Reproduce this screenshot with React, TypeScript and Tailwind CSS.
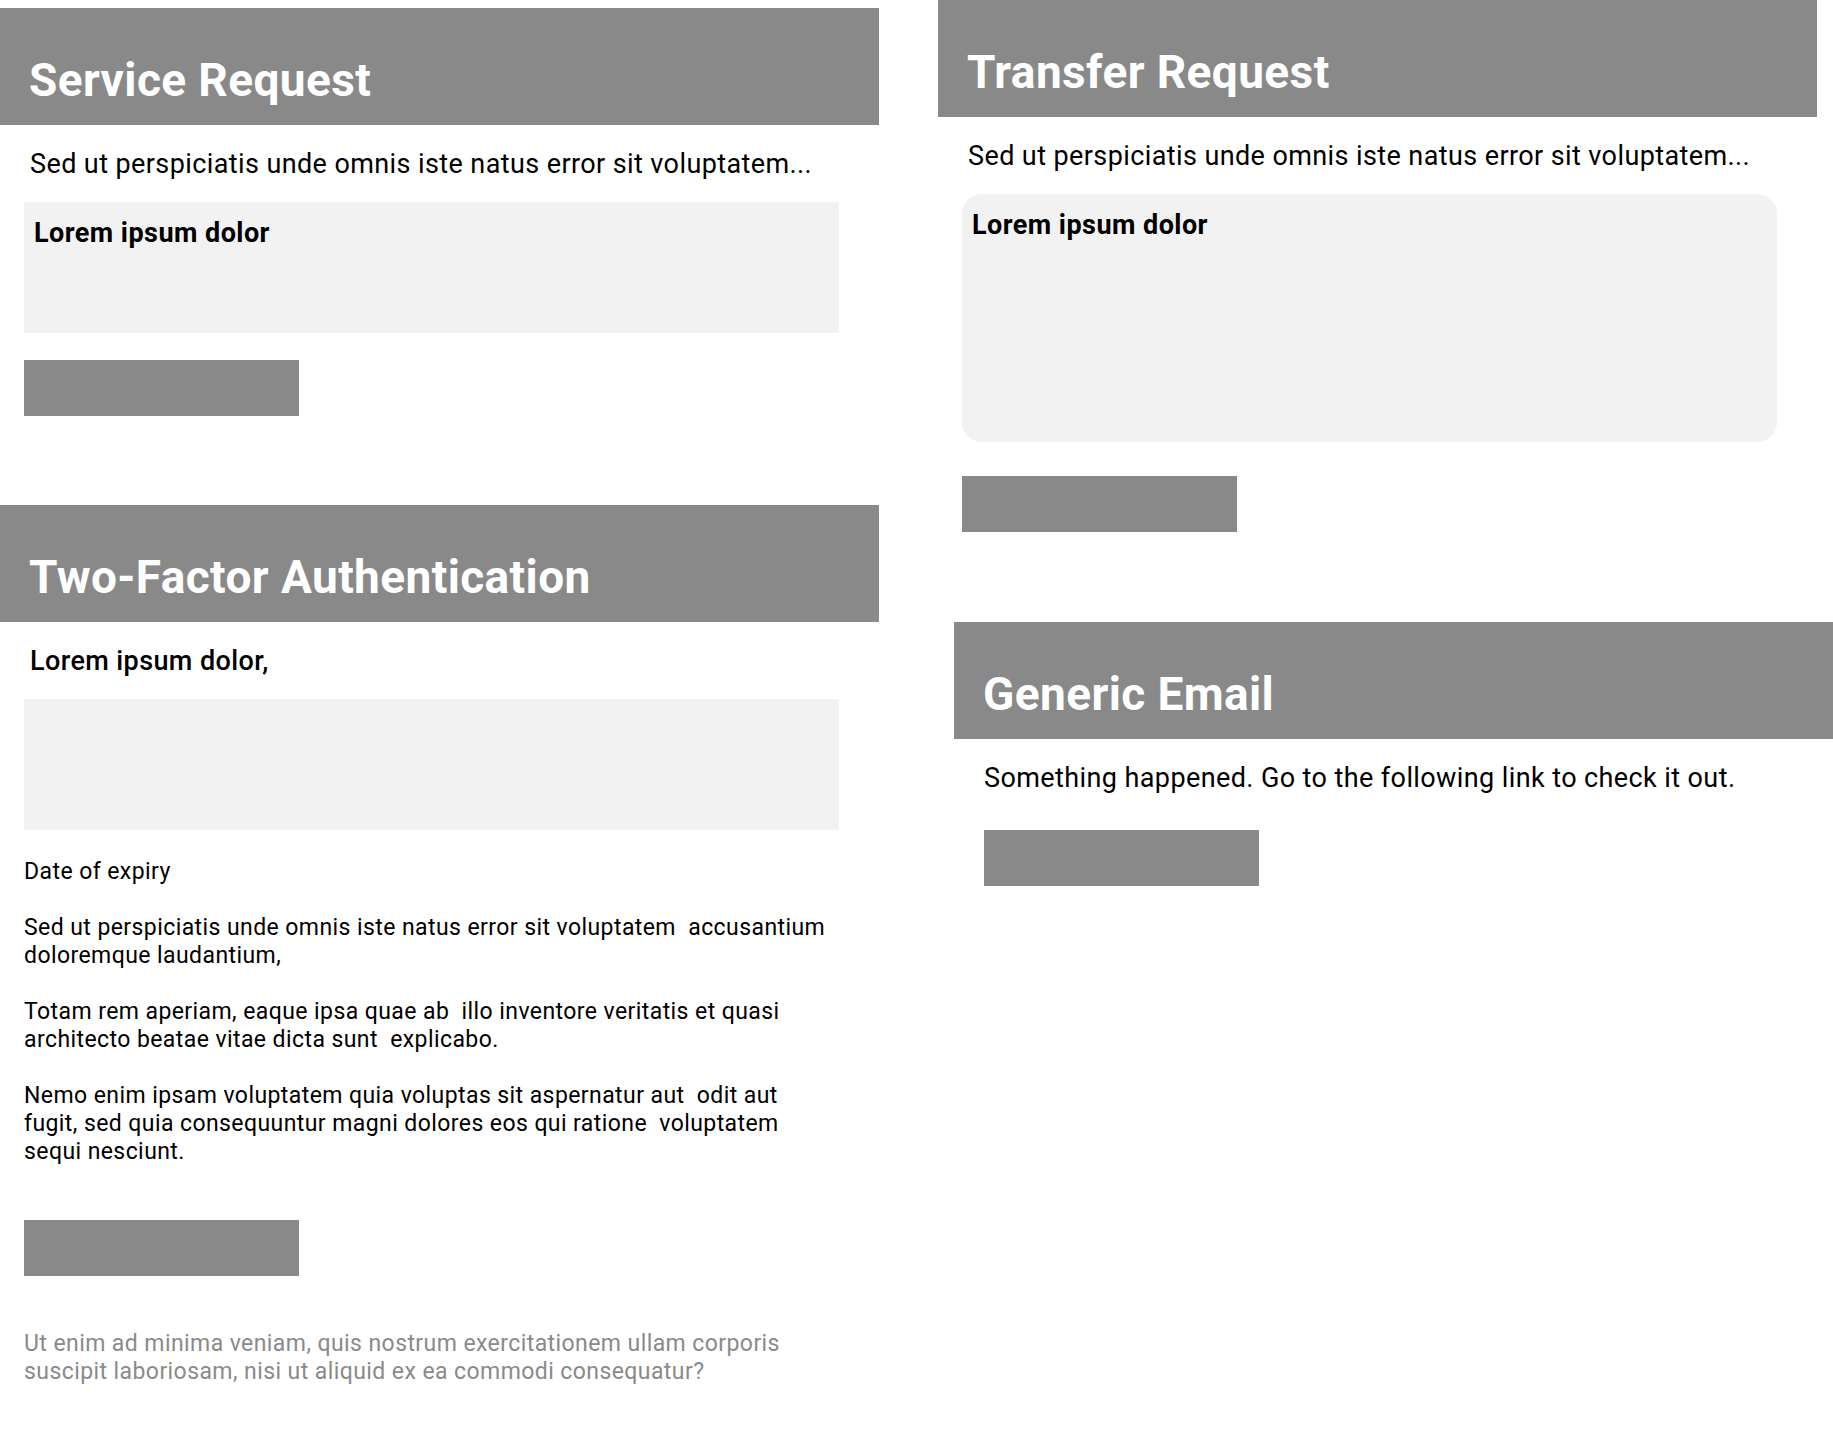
const font = { fontFamily: "Roboto, 'Liberation Sans', sans-serif" };

function Header({ title }: { title: string }) {
  return (
    <div className="h-[117px] w-[879px] bg-[#898989] pl-[29px] pt-[46px]">
      <h1 className="text-[46px] leading-[52px] font-bold tracking-[0.4px] text-white">{title}</h1>
    </div>
  );
}

function Lead({ children, medium }: { children: React.ReactNode; medium?: boolean }) {
  return (
    <p
      className={`mt-[23px] pl-[30px] text-[27px] leading-[32px] tracking-[0.4px] text-black ${
        medium ? "font-medium" : ""
      }`}
    >
      {children}
    </p>
  );
}

function Block({ className = "" }: { className?: string }) {
  return <div className={`h-14 w-[275px] bg-[#898989] ${className}`} />;
}

export default function App() {
  return (
    <div style={font} className="flex min-h-[1442px] w-[1833px] bg-white text-black">
      {/* left column */}
      <div className="w-[879px] shrink-0 pt-2">
        <section>
          <Header title="Service Request" />
          <Lead>Sed ut perspiciatis unde omnis iste natus error sit voluptatem...</Lead>
          <div className="ml-6 mt-[22px] h-[131px] w-[815px] bg-[#f2f2f2] pl-[10px] pt-[15px]">
            <p className="text-[27px] leading-[32px] font-bold tracking-[0.45px]">Lorem ipsum dolor</p>
          </div>
          <Block className="ml-6 mt-[27px]" />
        </section>

        <section className="mt-[89px]">
          <Header title="Two-Factor Authentication" />
          <Lead medium>Lorem ipsum dolor,</Lead>
          <div className="ml-6 mt-[22px] h-[131px] w-[815px] bg-[#f2f2f2]" />
          <div className="ml-6 mt-[28px] w-[808px] text-[23px] leading-[28px] tracking-[0.42px] whitespace-pre-wrap">
            <p className="mb-7">Date of expiry</p>
            <p className="mb-7">
              Sed ut perspiciatis unde omnis iste natus error sit voluptatem  accusantium doloremque laudantium,
            </p>
            <p className="mb-7">
              Totam rem aperiam, eaque ipsa quae ab  illo inventore veritatis et quasi architecto beatae vitae dicta sunt  explicabo.
            </p>
            <p>
              Nemo enim ipsam voluptatem quia voluptas sit aspernatur aut  odit aut fugit, sed quia consequuntur magni dolores eos qui ratione  voluptatem sequi nesciunt.
            </p>
          </div>
          <Block className="ml-6 mt-[54px]" />
          <p className="ml-6 mt-[54px] w-[808px] text-[23px] leading-[28px] tracking-[0.42px] text-[#8a8a8a]">
            Ut enim ad minima veniam, quis nostrum exercitationem ullam corporis suscipit laboriosam, nisi ut aliquid ex ea commodi consequatur?
          </p>
        </section>
      </div>

      {/* right column */}
      <div className="ml-[59px] flex-1">
        <section>
          <Header title="Transfer Request" />
          <Lead>Sed ut perspiciatis unde omnis iste natus error sit voluptatem...</Lead>
          <div className="ml-6 mt-[22px] h-[248px] w-[815px] rounded-[20px] bg-[#f2f2f2] pl-[10px] pt-[15px]">
            <p className="text-[27px] leading-[32px] font-bold tracking-[0.45px]">Lorem ipsum dolor</p>
          </div>
          <Block className="ml-6 mt-[34px]" />
        </section>

        <section className="ml-4 mt-[90px]">
          <Header title="Generic Email" />
          <Lead>Something happened. Go to the following link to check it out.</Lead>
          <Block className="ml-[30px] mt-[36px]" />
        </section>
      </div>
    </div>
  );
}
